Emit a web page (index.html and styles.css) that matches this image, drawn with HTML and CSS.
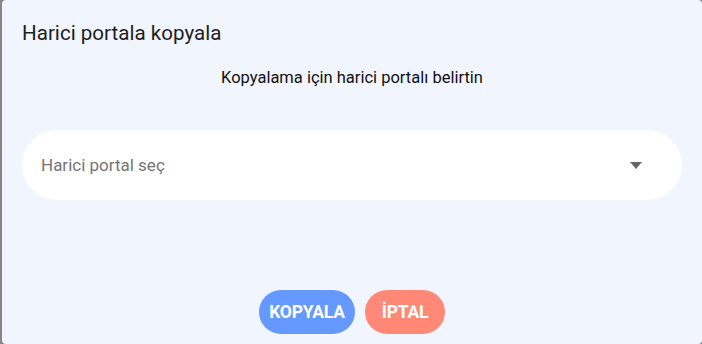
FILE: index.html
```html
<!DOCTYPE html>
<html lang="tr">
<head>
<meta charset="utf-8">
<link rel="stylesheet" href="styles.css">
</head>
<body>
<div class="dialog">
  <h2 class="title">Harici portala kopyala</h2>
  <p class="subtitle">Kopyalama için harici portalı belirtin</p>
  <div class="select">
    <span class="placeholder">Harici portal seç</span>
    <svg class="caret" width="12" height="7" viewBox="0 0 12 7"><path d="M0 0h12L6 7z" fill="#666"/></svg>
  </div>
  <div class="actions">
    <button class="btn btn-primary">KOPYALA</button>
    <button class="btn btn-danger">İPTAL</button>
  </div>
</div>
</body>
</html>
```

FILE: styles.css
```css
html, body {
  margin: 0;
  padding: 0;
  width: 702px;
  height: 344px;
  overflow: hidden;
}
body {
  background: #868686;
  font-family: Roboto, "Noto Sans", sans-serif;
  display: flex;
}
.dialog {
  margin-left: 2px;
  flex: 1;
  height: 344px;
  box-sizing: border-box;
  background: #f1f5fe;
  border-radius: 4px;
  padding: 0 20px 0 20px;
  display: flex;
  flex-direction: column;
}
.title {
  margin: 19px 0 0 0;
  font-size: 20.6px;
  font-weight: 400;
  color: #1e1e1e;
  line-height: 28px;
}
.subtitle {
  margin: 21px 0 0 0;
  text-align: center;
  font-size: 16.5px;
  color: #111;
  line-height: 20px;
}
.select {
  margin-top: 42px;
  height: 70px;
  background: #fff;
  border-radius: 35px;
  display: flex;
  align-items: center;
  padding: 0 40px 0 19px;
}
.placeholder {
  flex: 1;
  font-size: 17px;
  color: #757575;
}
.caret {
  display: block;
}
.actions {
  margin-top: 90px;
  display: flex;
  justify-content: center;
  gap: 10px;
}
.btn {
  height: 44px;
  border: none;
  border-radius: 22px;
  padding: 0;
  font-family: Roboto, sans-serif;
  font-weight: 700;
  font-size: 17.5px;
  color: #fff;
  letter-spacing: -0.2px;
}
.btn-primary {
  background: #6699ff;
  width: 96px;
}
.btn-danger {
  background: #ff8877;
  width: 80px;
}
```
